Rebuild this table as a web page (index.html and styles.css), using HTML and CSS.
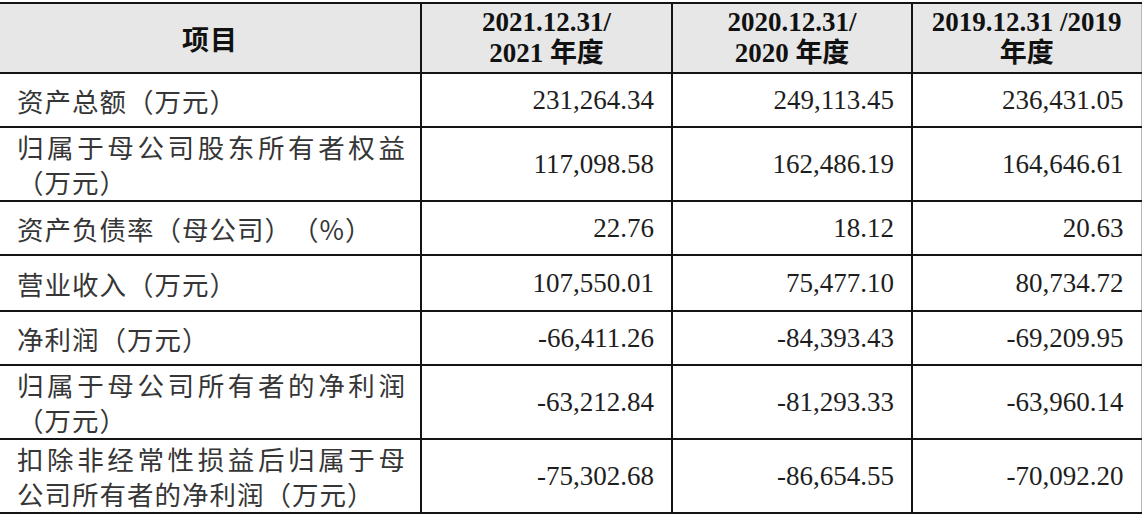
FILE: index.html
```html
<!DOCTYPE html>
<html lang="zh-CN">
<head>
<meta charset="utf-8">
<title>主要财务数据</title>
<link rel="stylesheet" href="styles.css">
</head>
<body>
<table class="fin">
  <colgroup>
    <col class="c1"><col class="c2"><col class="c3"><col class="c4">
  </colgroup>
  <thead>
    <tr class="h">
      <th class="item">项目</th>
      <th>2021.12.31/<br>2021 年度</th>
      <th>2020.12.31/<br>2020 年度</th>
      <th>2019.12.31 /2019<br>年度</th>
    </tr>
  </thead>
  <tbody>
    <tr class="r1">
      <td class="lbl">资产总额（万元）</td>
      <td class="num">231,264.34</td>
      <td class="num">249,113.45</td>
      <td class="num">236,431.05</td>
    </tr>
    <tr class="r2">
      <td class="lbl"><span class="jl">归属于母公司股东所有者权益</span><span class="ln">（万元）</span></td>
      <td class="num">117,098.58</td>
      <td class="num">162,486.19</td>
      <td class="num">164,646.61</td>
    </tr>
    <tr class="r1">
      <td class="lbl">资产负债率（母公司）（%）</td>
      <td class="num">22.76</td>
      <td class="num">18.12</td>
      <td class="num">20.63</td>
    </tr>
    <tr class="r4">
      <td class="lbl">营业收入（万元）</td>
      <td class="num">107,550.01</td>
      <td class="num">75,477.10</td>
      <td class="num">80,734.72</td>
    </tr>
    <tr class="r1">
      <td class="lbl">净利润（万元）</td>
      <td class="num">-66,411.26</td>
      <td class="num">-84,393.43</td>
      <td class="num">-69,209.95</td>
    </tr>
    <tr class="r2">
      <td class="lbl"><span class="jl">归属于母公司所有者的净利润</span><span class="ln">（万元）</span></td>
      <td class="num">-63,212.84</td>
      <td class="num">-81,293.33</td>
      <td class="num">-63,960.14</td>
    </tr>
    <tr class="r2">
      <td class="lbl"><span class="jl">扣除非经常性损益后归属于母</span><span class="ln">公司所有者的净利润（万元）</span></td>
      <td class="num">-75,302.68</td>
      <td class="num">-86,654.55</td>
      <td class="num">-70,092.20</td>
    </tr>
  </tbody>
</table>
</body>
</html>
```

FILE: styles.css
```css
html, body {
  margin: 0;
  padding: 0;
  background: #ffffff;
}

body {
  padding-top: 2px;
}

.fin {
  border-collapse: collapse;
  table-layout: fixed;
  width: 1141px;
  font-family: "Liberation Serif", "Noto Sans CJK SC", serif;
  color: #1c1c1c;
  border-right: 1px solid #b8b8b8;
}

.c1 { width: 421px; }
.c2 { width: 251px; }
.c3 { width: 240px; }
.c4 { width: 229px; }

.fin th,
.fin td {
  border-top: 2px solid #141414;
  border-bottom: 2px solid #141414;
  border-left: 2px solid #141414;
  padding: 0;
  vertical-align: middle;
}

.fin th:first-child,
.fin td:first-child {
  border-left: none;
}

.h th {
  height: 68px;
  background: #e7e7e7;
  font-weight: bold;
  font-size: 27px;
  line-height: 31px;
  text-align: center;
  color: #111111;
}

.h th.item {
  font-family: "Noto Sans CJK SC", sans-serif;
  font-size: 27px;
  letter-spacing: 1px;
}

.r1 td { height: 52px; }
.r4 td { height: 54px; }
.r2 td { height: 72px; }

.lbl {
  font-family: "Noto Sans CJK SC", sans-serif;
  font-size: 26.5px;
  line-height: 35px;
  letter-spacing: 1px;
  text-spacing-trim: space-all;
  color: #363636;
  padding-left: 17px !important;
  padding-right: 14px !important;
  text-align: left;
}

.jl {
  display: block;
  text-align: justify;
  text-align-last: justify;
}

.ln {
  display: block;
}

.num {
  font-size: 27px;
  text-align: right;
  padding-right: 17px !important;
  color: #1e1e1e;
}
```
